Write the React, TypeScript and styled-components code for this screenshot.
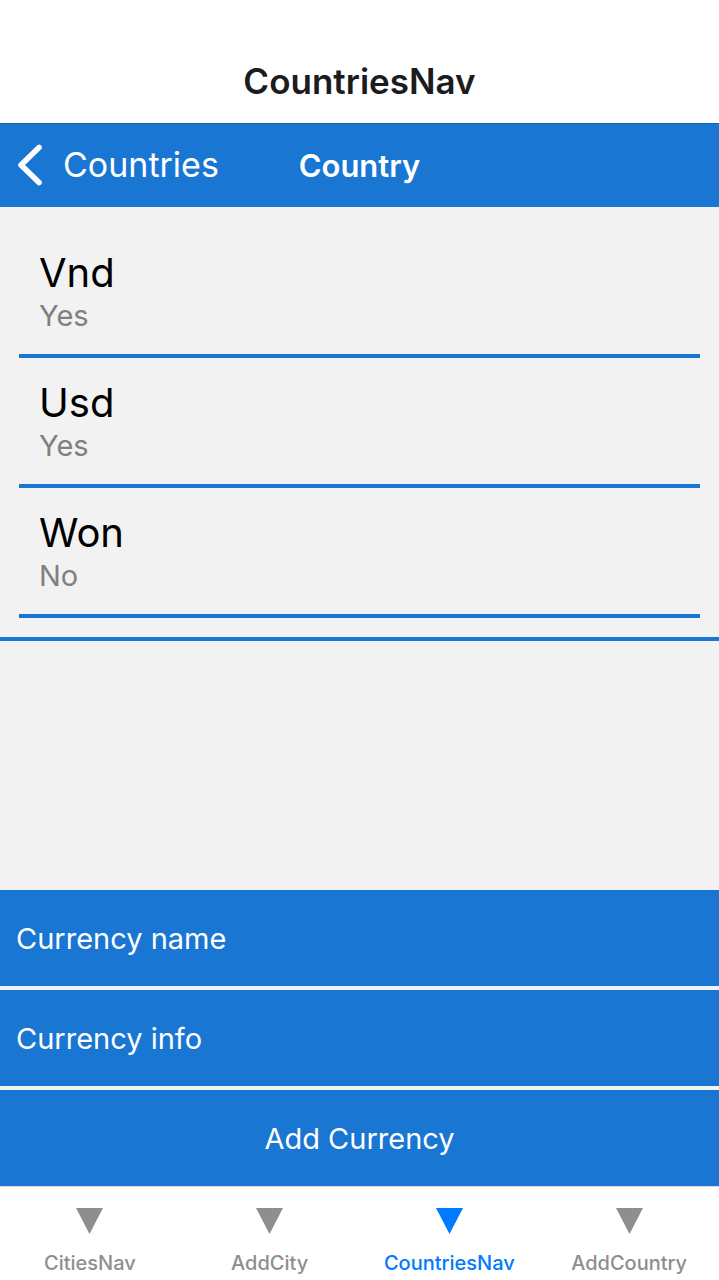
import React, { useState } from "react";
import styled, { createGlobalStyle } from "styled-components";

const blue = "#1976d2";

const GlobalStyle = createGlobalStyle`
  *, *::before, *::after { box-sizing: border-box; }
  body {
    margin: 0;
    background: #f2f2f2;
    font-family: Inter, "Liberation Sans", sans-serif;
  }
  button, input { font: inherit; }
`;

const Screen = styled.div`
  display: flex;
  flex-direction: column;
  min-height: 100vh;
`;

const TopHeader = styled.header`
  padding: 60px 16px 20px;
  background: #fff;
  text-align: center;
`;

const AppTitle = styled.h1`
  margin: 0;
  font-size: 35px;
  line-height: 43px;
  font-weight: 600;
  color: #1c1c1e;
`;

const NavBar = styled.div`
  display: grid;
  grid-template-columns: 1fr auto 1fr;
  align-items: center;
  height: 84px;
  padding: 0 16px 2px;
  border-top: 1px solid #1a5fa8;
  background: ${blue};
  color: #fff;
`;

const BackButton = styled.button`
  display: flex;
  align-items: center;
  gap: 20px;
  justify-self: start;
  padding: 0;
  border: 0;
  background: none;
  color: inherit;
  font-size: 34px;
  line-height: 40px;
  cursor: pointer;
`;

const NavTitle = styled.h2`
  margin: 0;
  padding-top: 2px;
  font-size: 31px;
  line-height: 40px;
  font-weight: 600;
`;

const Content = styled.main`
  display: flex;
  flex: 1;
  flex-direction: column;
  justify-content: space-between;
`;

const CurrencyList = styled.ul`
  margin: 0;
  padding: 21px 19px 19px;
  border-bottom: 4px solid ${blue};
  list-style: none;
`;

const CurrencyItem = styled.li`
  padding: 20px;
  height: 130px;
  border-bottom: 4px solid ${blue};
`;

const CurrencyName = styled.div`
  font-size: 40px;
  line-height: 50px;
  color: #000;
`;

const CurrencyInfo = styled.div`
  font-size: 29px;
  line-height: 36px;
  color: #808080;
`;

const Form = styled.form`
  display: flex;
  flex-direction: column;
  gap: 4px;
`;

const Field = styled.input`
  width: 100%;
  height: 96px;
  padding: 0 16px;
  border: 0;
  border-radius: 0;
  background: ${blue};
  color: #fff;
  font-size: 29px;
  &::placeholder { color: #fff; opacity: 1; }
`;

const SubmitButton = styled.button`
  height: 96px;
  border: 0;
  background: ${blue};
  color: #fff;
  font-size: 29px;
  cursor: pointer;
`;

const TabBar = styled.nav`
  display: flex;
  height: 94px;
  border-top: 1px solid #d8d8d8;
  background: #fff;
`;

const Tab = styled.a<{ $active: boolean }>`
  display: flex;
  flex: 1;
  flex-direction: column;
  align-items: center;
  gap: 17px;
  padding-top: 21px;
  color: ${(p) => (p.$active ? "#007aff" : "#8e8e8f")};
  font-size: 20px;
  line-height: 24px;
  font-weight: 500;
  text-decoration: none;
`;

const currencies = [
  { name: "Vnd", info: "Yes" },
  { name: "Usd", info: "Yes" },
  { name: "Won", info: "No" },
];

const tabs = ["CitiesNav", "AddCity", "CountriesNav", "AddCountry"];

export default function App() {
  const [name, setName] = useState("");
  const [info, setInfo] = useState("");

  return (
    <Screen>
      <GlobalStyle />
      <TopHeader>
        <AppTitle>CountriesNav</AppTitle>
      </TopHeader>
      <NavBar>
        <BackButton type="button">
          <svg width="27" height="42" viewBox="0 0 27 42" fill="none" aria-hidden="true">
            <path
              d="M23 3.5 5 21l18 17.5"
              stroke="currentColor"
              strokeWidth="5.6"
              strokeLinecap="round"
              strokeLinejoin="round"
            />
          </svg>
          Countries
        </BackButton>
        <NavTitle>Country</NavTitle>
      </NavBar>
      <Content>
        <CurrencyList>
          {currencies.map((c) => (
            <CurrencyItem key={c.name}>
              <CurrencyName>{c.name}</CurrencyName>
              <CurrencyInfo>{c.info}</CurrencyInfo>
            </CurrencyItem>
          ))}
        </CurrencyList>
        <Form onSubmit={(e) => e.preventDefault()}>
          <Field
            aria-label="Currency name"
            placeholder="Currency name"
            value={name}
            onChange={(e) => setName(e.target.value)}
          />
          <Field
            aria-label="Currency info"
            placeholder="Currency info"
            value={info}
            onChange={(e) => setInfo(e.target.value)}
          />
          <SubmitButton type="submit">Add Currency</SubmitButton>
        </Form>
      </Content>
      <TabBar>
        {tabs.map((tab) => (
          <Tab
            key={tab}
            href={`#${tab}`}
            $active={tab === "CountriesNav"}
            aria-current={tab === "CountriesNav" ? "page" : undefined}
          >
            <svg width="27" height="26" viewBox="0 0 27 26" fill="currentColor" aria-hidden="true">
              <path d="M0 0h27L13.5 26z" />
            </svg>
            {tab}
          </Tab>
        ))}
      </TabBar>
    </Screen>
  );
}
